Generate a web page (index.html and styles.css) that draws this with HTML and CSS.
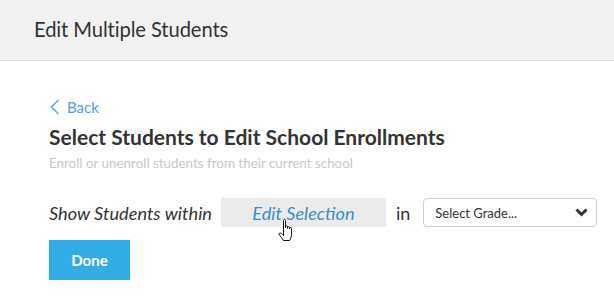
FILE: index.html
```html
<!DOCTYPE html>
<html>
<head>
<meta charset="utf-8">
<link rel="stylesheet" href="styles.css">
</head>
<body>
<header class="topbar"><h1 class="title">Edit Multiple Students</h1></header>
<main class="content">
  <a class="back" href="#"><svg class="chev" width="10" height="16" viewBox="0 0 10 16"><path d="M8.5 1 L1.5 8 L8.5 15" fill="none" stroke="#5aaee6" stroke-width="1.6"/></svg>Back</a>
  <h2 class="heading">Select Students to Edit School Enrollments</h2>
  <p class="sub">Enroll or unenroll students from their current school</p>
  <div class="row">
    <span class="label">Show Students within</span>
    <span class="editsel">Edit Selection
      <svg class="cursor" width="18" height="24" viewBox="0 0 18 24"><path d="M5.5 1.5 C5.5 0.8 6 0.5 6.5 0.5 C7 0.5 7.5 0.8 7.5 1.5 L7.5 9 L7.5 7.5 C7.5 7 8 6.8 8.5 6.8 C9 6.8 9.5 7 9.5 7.5 L9.5 9.5 L9.5 8.3 C9.5 7.8 10 7.6 10.5 7.6 C11 7.6 11.5 7.8 11.5 8.3 L11.5 10 L11.5 9.2 C11.5 8.7 12 8.5 12.5 8.5 C13 8.5 13.5 8.7 13.5 9.2 L13.5 15.5 C13.5 18 12.5 19.8 11.5 21.5 L5.5 21.5 C4.5 19.5 3 18 1.5 16 C0.8 15 1 14 2 14 C3 14 4 15 5.5 16.5 Z" fill="#fff" stroke="#111" stroke-width="1" stroke-linejoin="round"/></svg>
    </span>
    <span class="in">in</span>
    <div class="select"><span>Select Grade...</span><svg width="13" height="9" viewBox="0 0 13 9"><path d="M1.5 1.5 L6.5 6.5 L11.5 1.5" fill="none" stroke="#333" stroke-width="3"/></svg></div>
  </div>
  <button class="done">Done</button>
</main>
</body>
</html>
```
FILE: styles.css
```css
html, body { margin: 0; padding: 0; background: #fff; }
body { font-family: "Lato", "Noto Sans", sans-serif; color: #333; width: 614px; height: 307px; overflow: hidden; }
.topbar { height: 58px; padding-bottom: 2px; background: #f2f2f2; border-bottom: 1px solid #dedede; display: flex; align-items: center; padding-left: 34px; box-sizing: content-box; }
.title { margin: 0; font-weight: 400; font-size: 20.2px; color: #333; letter-spacing: -0.1px; }
.content { padding: 36px 0 0 49px; }
.back { display: flex; align-items: center; gap: 7px; color: #4aa3e0; text-decoration: none; font-size: 15px; line-height: 20px; margin-left: 1px; }
.chev { display: block; }
.heading { margin: 7px 0 0; font-size: 21px; font-weight: 700; line-height: 26px; color: #333; letter-spacing: 0; }
.sub { margin: 4px 0 0; font-size: 13.4px; color: #c8c8c8; line-height: 18px; }
.row { display: flex; align-items: center; margin-top: 26px; height: 29px; }
.label { font-style: italic; font-size: 18.2px; color: #333; }
.editsel { position: relative; margin-left: 9px; width: 165px; height: 29px; background: #ebebeb; color: #3a8fc8; font-style: italic; font-size: 18.2px; display: flex; align-items: center; justify-content: center; }
.cursor { position: absolute; left: 57px; top: 21px; }
.in { margin-left: 10px; font-size: 18px; }
.select { margin-left: 13px; width: 174px; height: 29px; box-sizing: border-box; border: 1px solid #cfcfcf; border-radius: 4px; display: flex; align-items: center; justify-content: space-between; padding: 0 8px 0 11px; font-size: 13px; color: #333; }
.select svg { display: block; }
.done { margin-top: 13px; width: 81px; height: 40px; border: 0; background: #33ace5; color: #fff; font-family: inherit; font-weight: 700; font-size: 15px; padding: 0; }
```
